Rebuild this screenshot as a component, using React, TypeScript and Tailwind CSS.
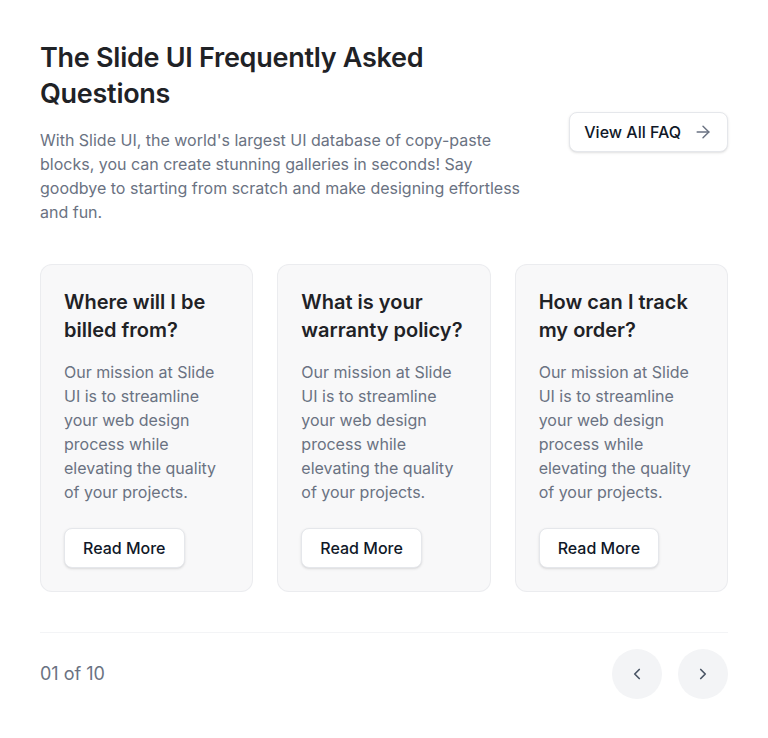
import React from 'react';
import { ArrowRight, ChevronLeft, ChevronRight } from 'lucide-react';

const FAQS = [
  { q: 'Where will I be billed from?' },
  { q: 'What is your warranty policy?' },
  { q: 'How can I track my order?' },
];

const BODY = 'Our mission at Slide UI is to streamline your web design process while elevating the quality of your projects.';

const App: React.FC = () => {
  return (
    <div className="min-h-screen bg-white px-10 pt-10 pb-10 font-['Inter',sans-serif]">
      {/* Header */}
      <div className="flex items-center justify-between gap-10">
        <div className="w-[490px]">
          <h1 className="text-[27px] leading-9 font-semibold tracking-[-0.01em] text-[#1f2226]">
            The Slide UI Frequently Asked Questions
          </h1>
          <p className="mt-4 text-base leading-6 text-gray-500">
            With Slide UI, the world's largest UI database of copy-paste blocks, you can create stunning galleries in seconds! Say goodbye to starting from scratch and make designing effortless and fun.
          </p>
        </div>
        <button className="flex h-10 shrink-0 items-center gap-3 whitespace-nowrap rounded-lg border border-gray-200 bg-white px-[14px] text-base font-medium text-gray-900 shadow-sm">
          View All FAQ
          <ArrowRight size={20} className="text-gray-500" strokeWidth={1.75} />
        </button>
      </div>

      {/* Cards */}
      <div className="mt-10 grid grid-cols-3 gap-6">
        {FAQS.map((f) => (
          <div key={f.q} className="flex flex-col rounded-xl border border-gray-200/70 bg-[#f8f8f9] p-[23px]">
            <h3 className="text-xl leading-7 font-semibold text-[#1f2226]">{f.q}</h3>
            <p className="mt-4 text-base leading-6 text-gray-500">{BODY}</p>
            <div className="mt-6">
              <button className="h-10 rounded-lg border border-gray-200 bg-white px-[18px] text-base font-medium text-gray-900 shadow-sm">
                Read More
              </button>
            </div>
          </div>
        ))}
      </div>

      {/* Footer */}
      <div className="mt-10 flex items-center justify-between border-t border-gray-100 pt-4">
        <span className="text-lg text-gray-500">01 of 10</span>
        <div className="flex gap-4">
          <button className="flex h-[50px] w-[50px] items-center justify-center rounded-full bg-gray-100 text-gray-600">
            <ChevronLeft size={18} strokeWidth={2.25} />
          </button>
          <button className="flex h-[50px] w-[50px] items-center justify-center rounded-full bg-gray-100 text-gray-600">
            <ChevronRight size={18} strokeWidth={2.25} />
          </button>
        </div>
      </div>
    </div>
  );
};

export default App;
